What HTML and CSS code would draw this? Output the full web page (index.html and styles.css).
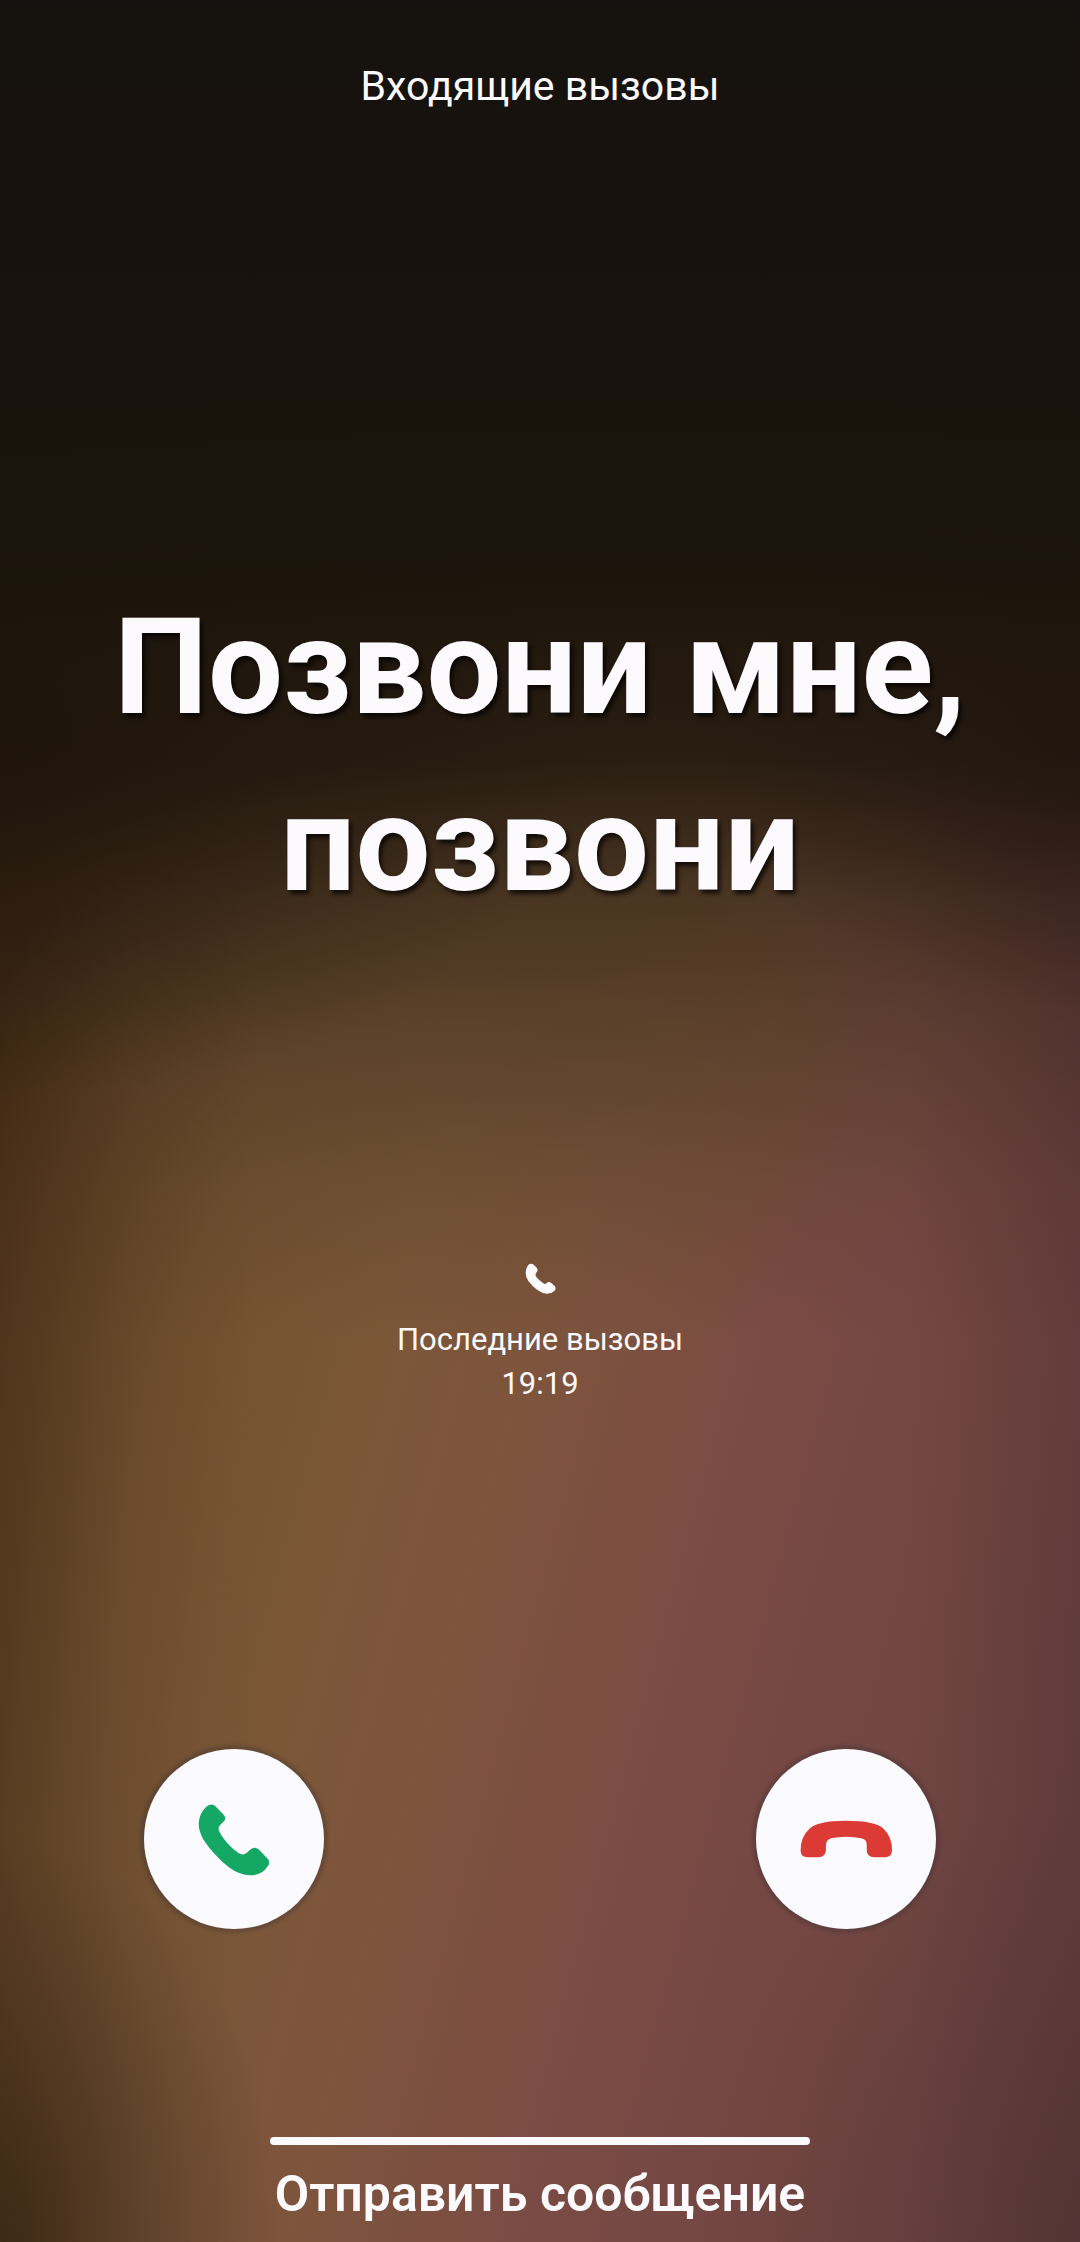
FILE: index.html
```html
<!DOCTYPE html>
<html lang="ru">
<head>
    <meta charset="UTF-8">
    <meta name="viewport" content="width=device-width, initial-scale=1">
    <title>Входящие вызовы</title>
    <link rel="stylesheet" href="styles.css">
</head>
<body>
    <main class="call-screen">
        <p class="status">Входящие вызовы</p>
        <h1 class="caller">Позвони мне, позвони</h1>

        <div class="recent">
            <svg class="recent-icon" viewBox="0 0 93 93" aria-hidden="true">
                <path d="M2 30Q3 12 12 4Q20 -1 27 6L35 14Q41 22 34 29Q29 34 34 42Q43 53 55 61Q60 65 65 60Q71 54 79 60L89 69Q95 77 88 84Q80 92 66 92Q52 92 38 82Q20 68 10 54Q2 42 2 30Z"/>
            </svg>
            <p>Последние вызовы</p>
            <p>19:19</p>
        </div>

        <div class="actions">
            <button type="button" class="round-btn accept" aria-label="Ответить">
                <svg class="accept-icon" viewBox="0 0 220 220" aria-hidden="true">
                    <path d="M22 14Q40 -4 54 11L76 34Q88 46 76 57L66 67Q58 76 66 90Q86 126 122 151Q136 160 146 151L158 140Q171 130 184 141L208 166Q222 179 208 193Q194 217 158 218Q124 217 92 193Q46 156 16 110Q2 86 2 62Q4 32 22 14Z"/>
                </svg>
            </button>
            <button type="button" class="round-btn decline" aria-label="Отклонить">
                <svg class="decline-icon" viewBox="0 0 280 114" aria-hidden="true">
                    <path d="M2 90Q2 50 30 25Q55 2 139 2Q225 2 250 25Q277 50 277 90V94Q275 112 256 112H224Q201 112 201 90V74Q201 58 184 55Q165 50 140 50Q112 50 94 55Q78 60 78 76V90Q77 112 56 112H22Q3 112 2 94Z"/>
                </svg>
            </button>
        </div>

        <button type="button" class="message-btn">Отправить сообщение</button>
    </main>
</body>
</html>
```
FILE: styles.css
```css
* { box-sizing: border-box; }
body { margin: 0; background: #15110e; color: #fcfafd; font-family: Roboto, Inter, sans-serif; }
p, h1 { margin: 0; }

.call-screen {
    min-height: 100vh;
    padding: 56px 0 18px;
    display: flex;
    flex-direction: column;
    align-items: center;
    text-align: center;
    background:
        linear-gradient(to bottom, #16120f 0%, #17120d 12%, rgba(29, 21, 12, 0.99) 27%, rgba(29, 20, 12, 0.84) 34%, rgba(30, 20, 12, 0.45) 40%, rgba(30, 20, 12, 0.25) 46%, rgba(30, 20, 12, 0.08) 53%, rgba(30, 20, 12, 0) 60%),
        radial-gradient(ellipse 55% 16% at 0% 33%, rgba(28, 18, 8, 0.8), rgba(28, 18, 8, 0)),
        radial-gradient(ellipse 35% 12% at 100% 33%, rgba(28, 18, 12, 0.6), rgba(28, 18, 12, 0)),
        radial-gradient(ellipse 26% 18% at 0% 100%, rgba(28, 18, 8, 0.5), rgba(28, 18, 8, 0)),
        radial-gradient(ellipse 36% 20% at 100% 100%, rgba(50, 28, 34, 0.25), rgba(50, 28, 34, 0)),
        linear-gradient(to right, rgba(40, 22, 8, 0.3), rgba(40, 22, 8, 0.08) 12%, rgba(40, 22, 8, 0) 24%, rgba(60, 34, 36, 0) 84%, rgba(60, 34, 36, 0.25)),
        radial-gradient(ellipse 56% 24% at 50% 37%, #6c5032 15%, rgba(108, 80, 50, 0)),
        linear-gradient(105deg, #593b1d 16%, #71502f 32%, #7b5738 44%, #7e543d 54%, #7a4b44 67%, #744743 78%, #6c4441 92%);
}

.status { font-size: 41px; line-height: 60px; }
.caller {
    margin-top: 463px;
    padding: 0 60px;
    font-size: 133px;
    font-weight: 700;
    line-height: 177px;
    text-shadow: 3px 4px 4px rgba(0, 0, 0, 0.7);
}

.recent { margin-top: 330px; font-size: 31px; line-height: 44px; }
.recent-icon { display: block; width: 31px; height: 31px; margin: 0 auto 24px; fill: #fcfafd; }

.actions { width: 100%; margin-top: 343px; padding: 0 144px; display: flex; justify-content: space-between; }
.round-btn {
    width: 180px;
    height: 180px;
    padding: 0;
    display: flex;
    align-items: center;
    justify-content: center;
    border: none;
    border-radius: 50%;
    background: #fbfaff;
    box-shadow: 0 0 3px 4px rgba(60, 50, 50, 0.3);
    cursor: pointer;
}
.accept { fill: #15a865; }
.decline { fill: #db3b34; }
.accept-icon { width: 73px; height: 73px; }
.decline-icon { width: 93px; height: 38px; }

.message-btn {
    width: 50%;
    margin-top: auto;
    padding: 0;
    border: none;
    background: none;
    color: inherit;
    font: 600 50px/60px Roboto, Inter, sans-serif;
    white-space: nowrap;
    display: flex;
    flex-direction: column;
    align-items: center;
    gap: 19px;
    cursor: pointer;
}
.message-btn::before { content: ""; width: 100%; height: 8px; border-radius: 4px; background: #fcfafd; }
```
